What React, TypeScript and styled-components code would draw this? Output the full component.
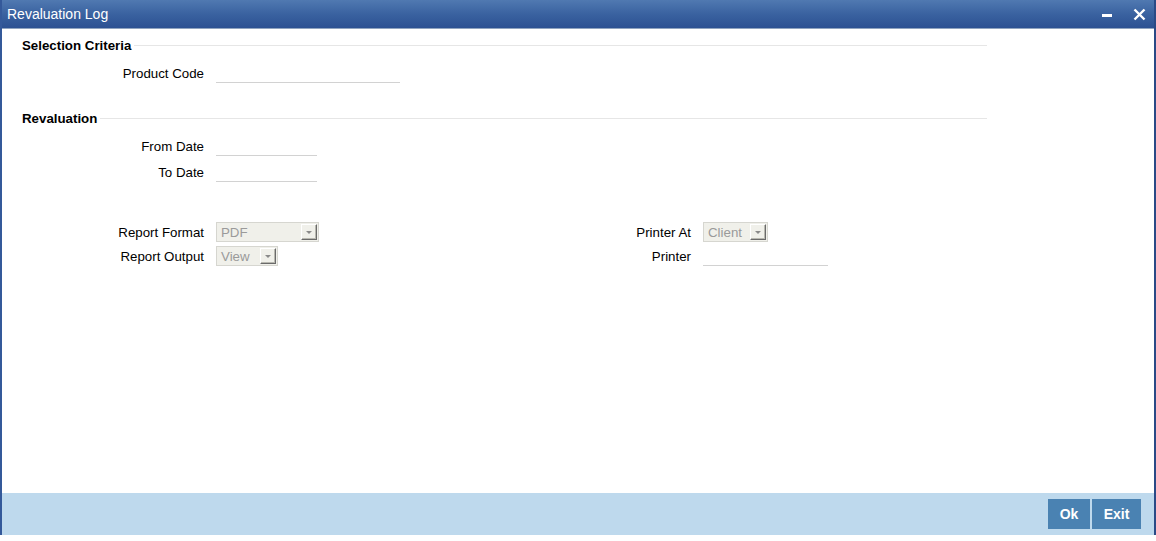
import React from 'react';
import styled, { createGlobalStyle } from 'styled-components';

const GlobalStyle = createGlobalStyle`
  html, body {
    margin: 0;
    padding: 0;
    background: #ffffff;
  }
  body {
    font-family: "Liberation Sans", Arial, Helvetica, sans-serif;
    font-size: 13.3px;
    color: #000;
  }
`;

const Window = styled.div`
  display: flex;
  flex-direction: column;
  width: 1156px;
  height: 535px;
  box-sizing: border-box;
  border-left: 2px solid #34599a;
  border-right: 2px solid #2a4a86;
  background: #ffffff;
`;

const TitleBar = styled.div`
  display: flex;
  align-items: center;
  height: 28px;
  padding: 0 8px 0 5px;
  background: linear-gradient(to bottom, #5079b1 0%, #3a62a0 50%, #2c5192 100%);
  border-bottom: 1px solid #8fa3bf;
  color: #ffffff;
  flex-shrink: 0;
`;

const Title = styled.div`
  flex: 1;
  font-size: 14px;
`;

const TitleButtons = styled.div`
  display: flex;
  align-items: center;
  gap: 18px;
`;

const IconButton = styled.button`
  display: flex;
  align-items: center;
  justify-content: center;
  width: 14px;
  height: 14px;
  padding: 0;
  border: none;
  background: transparent;
  cursor: pointer;
`;

const Body = styled.div`
  flex: 1;
  padding-top: 6px;
`;

const SectionHeader = styled.div<{ $gapTop?: number }>`
  display: flex;
  align-items: center;
  gap: 3px;
  height: 20px;
  width: 965px;
  margin-left: 20px;
  margin-top: ${(p) => p.$gapTop ?? 0}px;
  font-weight: bold;
`;

const HeaderLine = styled.div`
  flex: 1;
  height: 1px;
  background: #e6e6e6;
`;

const Rows = styled.div<{ $gapTop?: number }>`
  display: flex;
  flex-direction: column;
  margin-top: ${(p) => p.$gapTop ?? 0}px;
`;

const Row = styled.div<{ $h?: number }>`
  display: grid;
  grid-template-columns: 202px 300px 163px 1fr;
  column-gap: 12px;
  align-items: center;
  height: ${(p) => p.$h ?? 26}px;
`;

const Label = styled.label`
  text-align: right;
  white-space: nowrap;
`;

const TextInput = styled.input<{ $w: number }>`
  box-sizing: border-box;
  width: ${(p) => p.$w}px;
  height: 20px;
  padding: 0 3px;
  border: none;
  border-bottom: 1px solid #d2d2d2;
  background: transparent;
  font-family: inherit;
  font-size: 13.3px;
  outline: none;
`;

const SelectBox = styled.div<{ $w: number }>`
  box-sizing: border-box;
  display: flex;
  align-items: center;
  width: ${(p) => p.$w}px;
  height: 20px;
  padding: 0 1px 0 4px;
  border: 1px solid #d6d6d0;
  background: #f0f0ea;
  color: #9a9a9a;
  font-size: 13.3px;
`;

const SelectText = styled.span`
  flex: 1;
`;

const Arrow = styled.span`
  box-sizing: border-box;
  display: flex;
  align-items: center;
  justify-content: center;
  width: 16px;
  height: 16px;
  background: #f0f0ea;
  border-top: 1px solid #ffffff;
  border-left: 1px solid #ffffff;
  border-right: 1px solid #6a6a6a;
  border-bottom: 1px solid #6a6a6a;
  box-shadow: inset -1px -1px 0 #b8b8b0;
`;

const Footer = styled.div`
  display: flex;
  justify-content: flex-end;
  align-items: center;
  gap: 2px;
  height: 42px;
  padding-right: 13px;
  background: #bed9ed;
  flex-shrink: 0;
`;

const FooterButton = styled.button<{ $w: number }>`
  width: ${(p) => p.$w}px;
  height: 30px;
  padding: 0;
  border: none;
  background: #4a82b2;
  color: #ffffff;
  font-family: inherit;
  font-size: 14px;
  font-weight: bold;
  cursor: pointer;
`;

function Select({ value, width }: { value: string; width: number }) {
  return (
    <SelectBox $w={width}>
      <SelectText>{value}</SelectText>
      <Arrow>
        <svg width="8" height="5" viewBox="0 0 8 5">
          <path d="M1 1 L7 1 L4 4 Z" fill="#8a8a8a" />
        </svg>
      </Arrow>
    </SelectBox>
  );
}

export default function App() {
  return (
    <>
      <GlobalStyle />
      <Window>
        <TitleBar>
          <Title>Revaluation Log</Title>
          <TitleButtons>
            <IconButton aria-label="Minimize">
              <svg width="12" height="12" viewBox="0 0 12 12">
                <rect x="1" y="6" width="10" height="3" fill="#ffffff" />
              </svg>
            </IconButton>
            <IconButton aria-label="Close">
              <svg width="13" height="13" viewBox="0 0 13 13">
                <path d="M1.5 1.5 L11.5 11.5 M11.5 1.5 L1.5 11.5" stroke="#ffffff" strokeWidth="2.4" />
              </svg>
            </IconButton>
          </TitleButtons>
        </TitleBar>

        <Body>
          <SectionHeader>
            Selection Criteria
            <HeaderLine />
          </SectionHeader>
          <Rows $gapTop={5}>
            <Row>
              <Label>Product Code</Label>
              <TextInput $w={184} />
            </Row>
          </Rows>

          <SectionHeader $gapTop={22}>
            Revaluation
            <HeaderLine />
          </SectionHeader>
          <Rows $gapTop={5}>
            <Row>
              <Label>From Date</Label>
              <TextInput $w={101} />
            </Row>
            <Row>
              <Label>To Date</Label>
              <TextInput $w={101} />
            </Row>
          </Rows>

          <Rows $gapTop={35}>
            <Row $h={24}>
              <Label>Report Format</Label>
              <Select value="PDF" width={103} />
              <Label>Printer At</Label>
              <Select value="Client" width={65} />
            </Row>
            <Row $h={24}>
              <Label>Report Output</Label>
              <Select value="View" width={62} />
              <Label>Printer</Label>
              <TextInput $w={125} />
            </Row>
          </Rows>
        </Body>

        <Footer>
          <FooterButton $w={42}>Ok</FooterButton>
          <FooterButton $w={49}>Exit</FooterButton>
        </Footer>
      </Window>
    </>
  );
}
